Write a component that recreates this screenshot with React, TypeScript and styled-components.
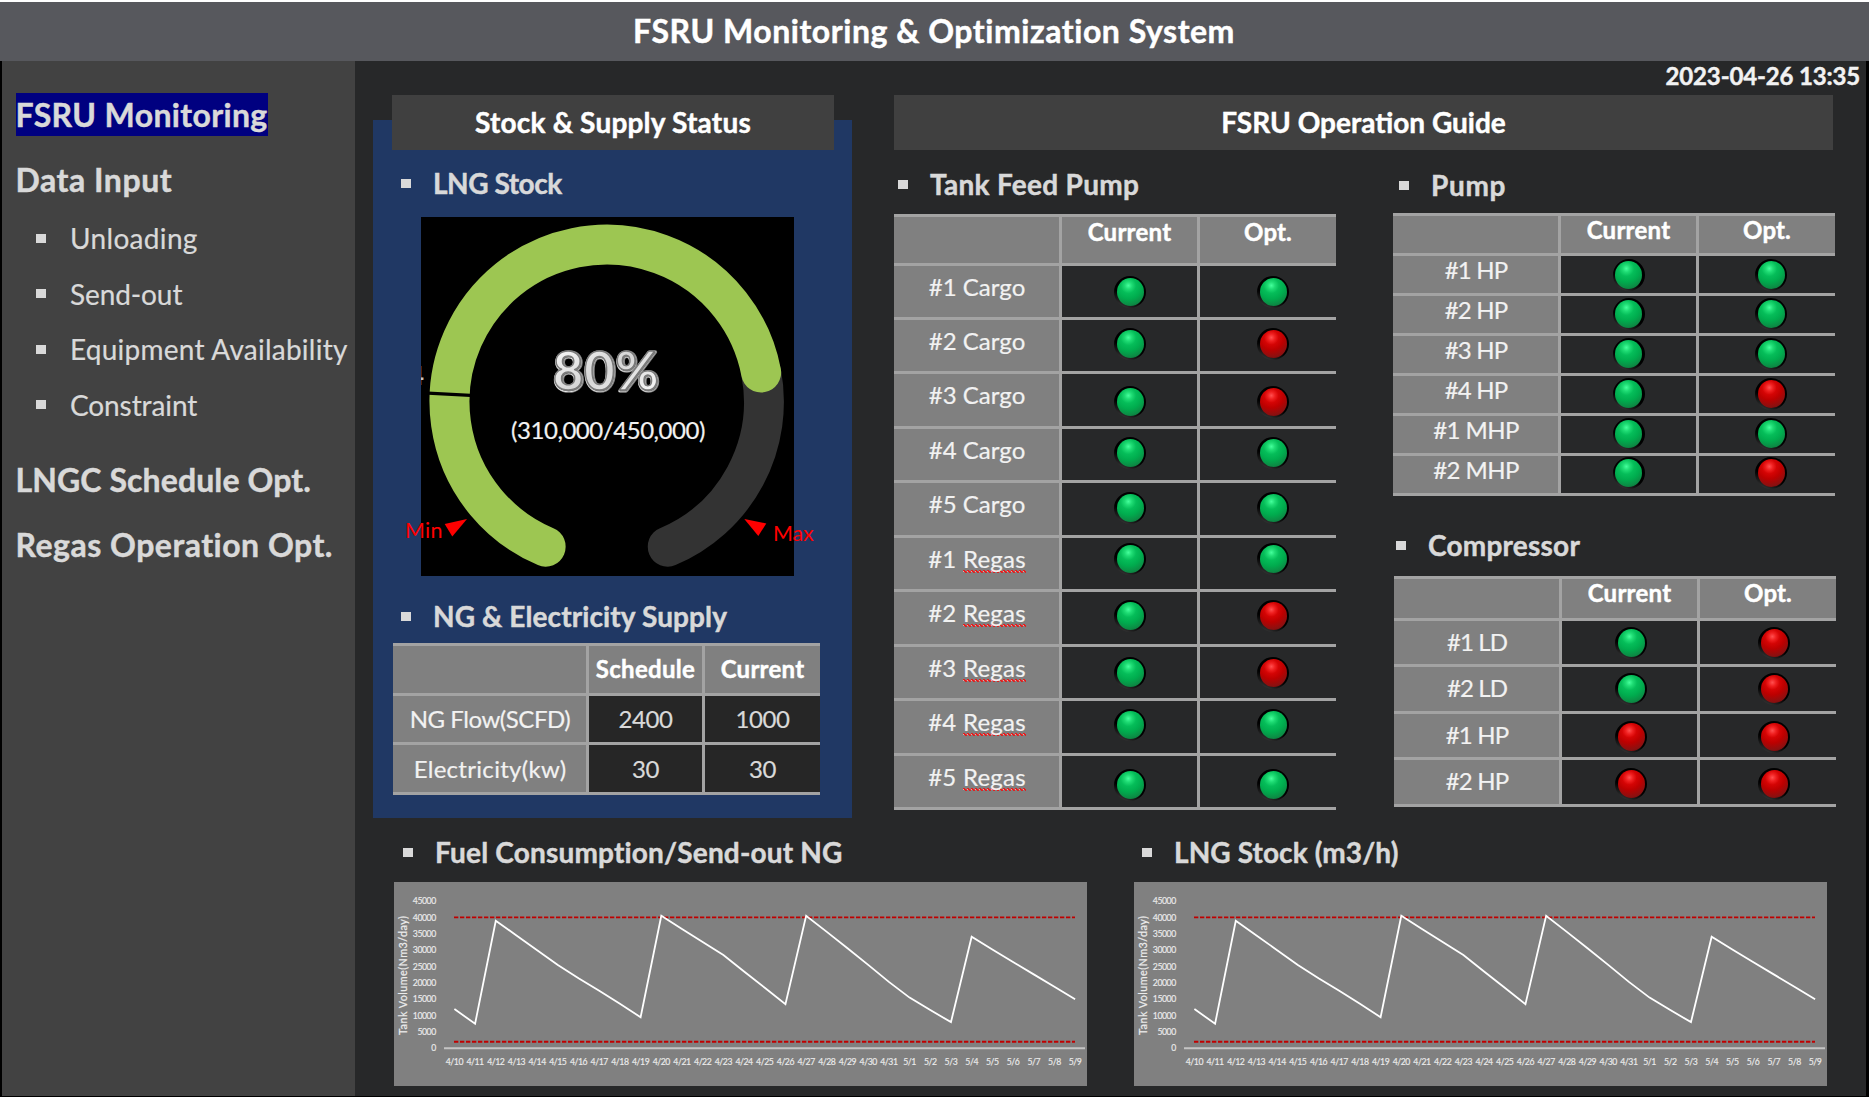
import React from "react";
import styled, { createGlobalStyle, css } from "styled-components";

const FONT = 'Lato, "Liberation Sans", sans-serif';
const C = {
  bg: "#272829",
  bar: "#57585d",
  side: "#424242",
  card: "#404040",
  blue: "#203864",
  cell: "#808080",
  line: "#a3a3a3",
  soft: "#d9d9d9",
  label: "#f2f2f2",
};

const Global = createGlobalStyle`
  *, *::before, *::after { box-sizing: border-box; }
  body { margin: 0; background: #000; font-family: ${FONT}; }
`;

const heavy = css`
  font-weight: 700;
  -webkit-text-stroke: 0.45px currentColor;
`;

const Screen = styled.div`
  width: 1869px;
  height: 1097px;
  display: flex;
  flex-direction: column;
  overflow: hidden;
  background: #000;
  border-top: 2px solid #fff;
`;

const TitleBar = styled.header`
  height: 59px;
  flex: none;
  display: flex;
  align-items: center;
  justify-content: center;
  padding: 0 1px 1px 0;
  background: ${C.bar};
`;

const Title = styled.h1`
  margin: 0;
  font-size: 32px;
  line-height: 38px;
  ${heavy}
  letter-spacing: 0.54px;
  color: #fff;
  white-space: nowrap;
`;

const Body = styled.div`
  height: 1035px;
  flex: none;
  display: flex;
  padding: 0 3px 0 2px;
`;

const Sidebar = styled.nav`
  width: 353px;
  flex: none;
  display: flex;
  flex-direction: column;
  align-items: flex-start;
  padding: 32px 0 0 13.5px;
  background: ${C.side};
`;

const NavHead = styled.a<{ $active?: boolean; $top?: number; $ls: number }>`
  margin-top: ${(p) => p.$top ?? 0}px;
  font-size: 32px;
  ${heavy}
  padding-top: 1px;
  line-height: 42px;
  letter-spacing: ${(p) => p.$ls}px;
  color: ${C.soft};
  white-space: nowrap;
  ${(p) => p.$active && css`background: #000080;`}
`;

const SubList = styled.ul`
  list-style: none;
  margin: 17px 0 0;
  padding: 0 0 0 20.5px;
  display: flex;
  flex-direction: column;
  gap: 15.5px;
`;

const SubItem = styled.li<{ $ls: number }>`
  display: flex;
  align-items: center;
  gap: 24px;
  font-size: 28px;
  line-height: 40px;
  letter-spacing: ${(p) => p.$ls}px;
  color: ${C.soft};
  -webkit-text-stroke: 0.2px currentColor;
  white-space: nowrap;
`;

const Bullet = styled.i`
  width: 10px;
  height: 9px;
  flex: none;
  background: ${C.soft};
`;

const Main = styled.main`
  flex: 1;
  display: flex;
  flex-direction: column;
  background: ${C.bg};
`;

const Stamp = styled.time`
  height: 34px;
  flex: none;
  padding: 0 6px 0 0;
  text-align: right;
  font-size: 24px;
  ${heavy}
  line-height: 29px;
  letter-spacing: -0.16px;
  color: ${C.label};
`;

const TopRow = styled.div`
  display: flex;
  gap: 42px;
  height: 723px;
  flex: none;
  padding-left: 18px;
`;

const StockPanel = styled.section`
  width: 479px;
  height: 698px;
  margin-top: 25px;
  padding: 0 18px 0 19px;
  background: ${C.blue};
`;

const PanelTitle = styled.h2<{ $lift?: number; $ls?: number }>`
  height: 55px;
  margin: ${(p) => -(p.$lift ?? 0)}px 0 0;
  padding-bottom: 1px;
  display: flex;
  align-items: center;
  justify-content: center;
  font-size: 28px;
  ${heavy}
  letter-spacing: ${(p) => p.$ls ?? 0}px;
  color: #fff;
  background: ${C.card};
`;

const Heading = styled.h3<{ $top: number; $left: number; $ls: number }>`
  margin: ${(p) => p.$top}px 0 0 ${(p) => p.$left}px;
  height: 34px;
  display: flex;
  align-items: center;
  gap: 22px;
  font-size: 28px;
  ${heavy}
  line-height: 34px;
  letter-spacing: ${(p) => p.$ls}px;
  color: ${C.soft};
  white-space: nowrap;
`;

const GaugeBox = styled.div`
  width: 373px;
  height: 359px;
  margin: 17px 0 0 29px;
  background: #000;

  svg {
    display: block;
    overflow: visible;
  }
`;

const Table = styled.div<{ $cols: string; $rows: string; $h: number; $top: number; $left?: number; $w: number }>`
  display: grid;
  grid-template-columns: ${(p) => p.$cols};
  grid-template-rows: ${(p) => p.$rows};
  gap: 3px;
  width: ${(p) => p.$w}px;
  height: ${(p) => p.$h}px;
  margin: ${(p) => p.$top}px 0 0 ${(p) => p.$left ?? 0}px;
  padding: 3px 0;
  background: ${C.line};
`;

const Cell = styled.div<{ $kind: "head" | "label" | "value"; $pad?: number; $ls?: number }>`
  display: flex;
  justify-content: center;
  align-items: ${(p) => (p.$pad === undefined ? "center" : "flex-start")};
  padding: ${(p) => p.$pad ?? 0}px 0 0 ${(p) => (p.$kind === "label" ? 1 : 0)}px;
  min-height: 0;
  font-size: 24px;
  line-height: 28px;
  letter-spacing: ${(p) => p.$ls ?? 0}px;
  white-space: pre;
  color: ${(p) => (p.$kind === "head" ? "#fff" : p.$kind === "label" ? C.label : C.soft)};
  background: ${(p) => (p.$kind === "value" ? "#262626" : C.cell)};
  ${(p) => (p.$kind === "head" ? heavy : css`-webkit-text-stroke: 0.2px currentColor;`)}
`;

const LightCell = styled.div<{ $y: number }>`
  display: flex;
  justify-content: center;
  align-items: flex-start;
  min-height: 0;
  padding-top: ${(p) => p.$y}px;
  background: ${C.bg};
`;

const Lamp = styled.span<{ $on: boolean; $dx: number }>`
  width: 32px;
  height: 32px;
  flex: none;
  margin-left: ${(p) => p.$dx * 2}px;
  display: grid;
  place-items: center;
  border-radius: 50%;
  background: linear-gradient(25deg, #4a4a4a 0%, #1c1c1c 22%, #000 40%);

  &::before {
    content: "";
    width: 27px;
    height: 28px;
    border-radius: 50%;
    background: ${(p) =>
      p.$on
        ? "radial-gradient(circle at 42% 27%, #45ff9c 0, #1fdc74 14%, #05bd59 30%, #00ac4e 52%, #0c8c45 74%, #0a5c30 100%)"
        : "radial-gradient(circle at 42% 27%, #ff5050 0, #f02020 14%, #d40404 28%, #bc0000 48%, #8c1010 74%, #5c0a0a 100%)"};
  }
`;

const Flagged = styled.span`
  background:
    linear-gradient(45deg, transparent 38%, #e02020 38%, #e02020 62%, transparent 62%) 0 25px / 4px 3px repeat-x,
    linear-gradient(-45deg, transparent 38%, #f6c4c4 38%, #e02020 62%, transparent 62%) 2px 25px / 4px 3px repeat-x;
`;

const Guide = styled.section`
  width: 942px;
`;

const GuideTitle = styled(PanelTitle)`
  width: 939px;
`;

const GuideCols = styled.div`
  display: flex;
  gap: 57px;
`;

const GuideCol = styled.div`
  width: 442px;
`;

const ChartRow = styled.div`
  display: flex;
  gap: 47px;
  padding: 17px 0 0 39px;
`;

const ChartCard = styled.section`
  width: 693px;
`;

const ChartSvg = styled.svg`
  display: block;
  margin-top: 13px;
  background: ${C.cell};
  font-family: ${FONT};
`;

type Row = { label: string; flagged?: boolean; ls: number; cur: boolean; opt: boolean; y: number };

const tank: Row[] = [
  { label: "#1 Cargo", ls: 0.04, cur: true, opt: true, y: 10.2 },
  { label: "#2 Cargo", ls: 0.04, cur: true, opt: false, y: 8.2 },
  { label: "#3 Cargo", ls: 0.04, cur: true, opt: false, y: 11.7 },
  { label: "#4 Cargo", ls: 0.04, cur: true, opt: true, y: 7.7 },
  { label: "#5 Cargo", ls: 0.04, cur: true, opt: true, y: 8.7 },
  { label: "#1 Regas", ls: 0.24, flagged: true, cur: true, opt: true, y: 5.3 },
  { label: "#2 Regas", ls: 0.24, flagged: true, cur: true, opt: false, y: 7.7 },
  { label: "#3 Regas", ls: 0.24, flagged: true, cur: true, opt: false, y: 10.4 },
  { label: "#4 Regas", ls: 0.24, flagged: true, cur: true, opt: true, y: 7.9 },
  { label: "#5 Regas", ls: 0.24, flagged: true, cur: true, opt: true, y: 13.4 },
];

const pump: Row[] = [
  { label: "#1 HP", ls: -0.8, cur: true, opt: true, y: 2.6 },
  { label: "#2 HP", ls: -0.8, cur: true, opt: true, y: 2 },
  { label: "#3 HP", ls: -0.8, cur: true, opt: true, y: 2 },
  { label: "#4 HP", ls: -0.8, cur: true, opt: false, y: 1.5 },
  { label: "#1 MHP", ls: -0.6, cur: true, opt: true, y: 1.5 },
  { label: "#2 MHP", ls: -0.6, cur: true, opt: false, y: 0.6 },
];

const compressor: Row[] = [
  { label: "#1 LD", ls: -0.9, cur: true, opt: false, y: 6.2 },
  { label: "#2 LD", ls: -0.9, cur: true, opt: false, y: 6.3 },
  { label: "#1 HP", ls: -0.8, cur: false, opt: false, y: 7 },
  { label: "#2 HP", ls: -0.8, cur: false, opt: false, y: 7.4 },
];

type StatusProps = {
  rows: Row[];
  template: string;
  height: number;
  top: number;
  left?: number;
  headPad: number;
  pad: number;
  dx: [number, number];
};

function StatusTable({ rows, template, height, top, left, headPad, pad, dx }: StatusProps) {
  return (
    <Table $cols="165px 135px 136px" $rows={template} $h={height} $top={top} $left={left} $w={442}>
      <Cell $kind="head" />
      <Cell $kind="head" $pad={headPad} $ls={0.25}>Current</Cell>
      <Cell $kind="head" $pad={headPad} $ls={0.13}>Opt.</Cell>
      {rows.map((r) => {
        const [num, name] = r.label.split(" ");
        return (
          <React.Fragment key={r.label}>
            <Cell $kind="label" $pad={pad} $ls={r.ls}>
              {r.flagged ? <>{num} <Flagged>{name}</Flagged></> : r.label}
            </Cell>
            <LightCell $y={r.y}><Lamp $on={r.cur} $dx={dx[0]} /></LightCell>
            <LightCell $y={r.y}><Lamp $on={r.opt} $dx={dx[1]} /></LightCell>
          </React.Fragment>
        );
      })}
    </Table>
  );
}

function Gauge() {
  const cx = 185.7;
  const cy = 184.8;
  const r = 157.2;
  const at = (x: number, y: number) => {
    const a = Math.atan2(y - cy, x - cx);
    return `${cx + r * Math.cos(a)} ${cy + r * Math.sin(a)}`;
  };
  const left = at(124.5, 330);
  const right = at(246.9, 330);
  const level = at(340, 155.5);
  return (
    <GaugeBox>
      <svg width="373" height="359" viewBox="0 0 373 359" fontFamily={FONT}>
        <defs>
          <linearGradient id="steel" x1="0" y1="0" x2="1" y2="1">
            <stop offset="0" stopColor="#ffffff" />
            <stop offset="0.5" stopColor="#d6d6d6" />
            <stop offset="1" stopColor="#ffffff" />
          </linearGradient>
          <clipPath id="boxClip"><rect width="373" height="359" /></clipPath>
        </defs>
        <g fill="none" strokeWidth="40" strokeLinecap="round">
          <path d={`M${level} A${r} ${r} 0 0 1 ${right}`} stroke="#333333" />
          <path d={`M${left} A${r} ${r} 0 1 1 ${level}`} stroke="#9dc652" />
        </g>
        <path d="M7 176.2 L49.5 178.4" stroke="#000" strokeWidth="3.2" />
        <g clipPath="url(#boxClip)">
          <text x="-12" y="168" fontSize="26" fontWeight="700" fill="#c4c4c4">4</text>
        </g>
        <g fontSize="53" textAnchor="middle" strokeLinejoin="round" letterSpacing="0.5">
          <text x="185.8" y="174" fontWeight="700" fill="none" stroke="#858585" strokeWidth="3.6">80%</text>
          <text x="185.3" y="173.5" fontWeight="700" fill="none" stroke="#ececec" strokeWidth="2">80%</text>
          <text x="185.8" y="174" fontWeight="700" fill="#808080" stroke="#6e6e6e" strokeWidth="0.8">80%</text>
          <text x="185" y="173.2" fontWeight="700" fill="url(#steel)" stroke="#7a7a7a" strokeWidth="1.4">80%</text>
        </g>
        <text x="187" y="222" fontSize="24" letterSpacing="-0.45" textAnchor="middle" fill={C.label} stroke={C.label} strokeWidth="0.2">
          (310,000/450,000)
        </text>
        <g fill="#ff0000">
          <path d="M23.7 307 L46 302 L31.3 319.5 Z" />
          <path d="M323.3 302 L345.3 306.5 L337.3 319 Z" />
          <text x="-16" y="321" fontSize="21.5" letterSpacing="0.25">Min</text>
          <text x="352" y="324" fontSize="21.5" letterSpacing="-0.2">Max</text>
        </g>
      </svg>
    </GaugeBox>
  );
}

const days = [
  ...Array.from({ length: 22 }, (_, i) => `4/${10 + i}`),
  ...Array.from({ length: 9 }, (_, i) => `5/${1 + i}`),
];
const volume = [
  12000, 7500, 39000, 34500, 30000, 25500, 21400, 17600, 13600, 9500, 40500, 36500, 32500, 28500, 23500, 18500,
  13500, 40500, 35600, 30600, 25500, 20300, 15500, 11700, 8000, 34100, 30200, 26400, 22600, 18800, 15000,
];
const ticks = [45000, 40000, 35000, 30000, 25000, 20000, 15000, 10000, 5000, 0];

function TankChart() {
  const px = (i: number) => 60.4 + i * 20.69;
  const py = (v: number) => 166.3 - (v * 147.2) / 45000;
  return (
    <ChartSvg width="693" height="204" viewBox="0 0 693 204">
      <g fill="#ececec" stroke="#ececec" strokeWidth="0.15" fontSize="8.7" letterSpacing="-0.44">
        {ticks.map((t) => (
          <text key={t} x="41.8" y={py(t) + 3.1} textAnchor="end">{t}</text>
        ))}
        {days.map((d, i) => (
          <text key={d} x={px(i)} y="182.7" textAnchor="middle">{d}</text>
        ))}
      </g>
      <text
        transform="translate(12.9 153) rotate(-90)"
        fontSize="10.8"
        letterSpacing="0.46"
        fill="#ececec"
        stroke="#ececec"
        strokeWidth="0.2"
      >
        Tank Volume(Nm3/day)
      </text>
      <path d="M50 166.3 H691" stroke="#c4c4c4" strokeWidth="2" />
      {[40000, 2000].map((v) => (
        <path key={v} d={`M60 ${py(v)} H681`} stroke="#c00000" strokeWidth="1.8" strokeDasharray="4.3 1.7" />
      ))}
      <polyline
        points={volume.map((v, i) => `${px(i)},${py(v)}`).join(" ")}
        fill="none"
        stroke="#fff"
        strokeWidth="1.8"
      />
    </ChartSvg>
  );
}

export default function App() {
  return (
    <>
      <Global />
      <Screen>
        <TitleBar>
          <Title>FSRU Monitoring &amp; Optimization System</Title>
        </TitleBar>
        <Body>
          <Sidebar>
            <NavHead $active $ls={0.35}>FSRU Monitoring</NavHead>
            <NavHead $top={22} $ls={0.54}>Data Input</NavHead>
            <SubList>
              <SubItem $ls={0.33}><Bullet />Unloading</SubItem>
              <SubItem $ls={-0.1}><Bullet />Send-out</SubItem>
              <SubItem $ls={0.25}><Bullet />Equipment Availability</SubItem>
              <SubItem $ls={-0.1}><Bullet />Constraint</SubItem>
            </SubList>
            <NavHead $top={33} $ls={0.1}>LNGC Schedule Opt.</NavHead>
            <NavHead $top={22} $ls={0.5}>Regas Operation Opt.</NavHead>
          </Sidebar>
          <Main>
            <Stamp>2023-04-26 13:35</Stamp>
            <TopRow>
              <StockPanel>
                <PanelTitle $lift={25} $ls={0.2}>Stock &amp; Supply Status</PanelTitle>
                <Heading $top={16} $left={9} $ls={-0.45}><Bullet />LNG Stock</Heading>
                <Gauge />
                <Heading $top={23} $left={9} $ls={0.11}><Bullet />NG &amp; Electricity Supply</Heading>
                <Table $cols="193px 113px 115px" $rows="repeat(3, 1fr)" $h={152} $top={10} $left={1} $w={427}>
                  <Cell $kind="head" />
                  <Cell $kind="head" $ls={0.3}>Schedule</Cell>
                  <Cell $kind="head" $ls={0.25}>Current</Cell>
                  <Cell $kind="label" $ls={-0.45}>NG Flow(SCFD)</Cell>
                  <Cell $kind="value" $ls={-0.4}>2400</Cell>
                  <Cell $kind="value" $ls={-0.4}>1000</Cell>
                  <Cell $kind="label" $ls={0.3}>Electricity(kw)</Cell>
                  <Cell $kind="value" $ls={-0.4}>30</Cell>
                  <Cell $kind="value" $ls={-0.4}>30</Cell>
                </Table>
              </StockPanel>
              <Guide>
                <GuideTitle>FSRU Operation Guide</GuideTitle>
                <GuideCols>
                  <GuideCol>
                    <Heading $top={17} $left={4} $ls={0.29}><Bullet />Tank Feed Pump</Heading>
                    <StatusTable rows={tank} template="45.5px repeat(10, 1fr)" height={596} top={13} headPad={1} pad={7} dx={[0.5, 5]} />
                  </GuideCol>
                  <GuideCol>
                    <Heading $top={18} $left={6} $ls={0.7}><Bullet />Pump</Heading>
                    <StatusTable rows={pump} template="repeat(7, 1fr)" height={283} top={11} headPad={0} pad={0} dx={[0, 4]} />
                    <Heading $top={32} $left={3} $ls={0.23}><Bullet />Compressor</Heading>
                    <StatusTable rows={compressor} template="38.5px repeat(4, 1fr)" height={231} top={14} left={1} headPad={0.4} pad={7} dx={[1.5, 6]} />
                  </GuideCol>
                </GuideCols>
              </Guide>
            </TopRow>
            <ChartRow>
              <ChartCard>
                <Heading $top={0} $left={9} $ls={0.18}><Bullet />Fuel Consumption/Send-out NG</Heading>
                <TankChart />
              </ChartCard>
              <ChartCard>
                <Heading $top={0} $left={8} $ls={0.1}><Bullet />LNG Stock (m3/h)</Heading>
                <TankChart />
              </ChartCard>
            </ChartRow>
          </Main>
        </Body>
      </Screen>
    </>
  );
}
